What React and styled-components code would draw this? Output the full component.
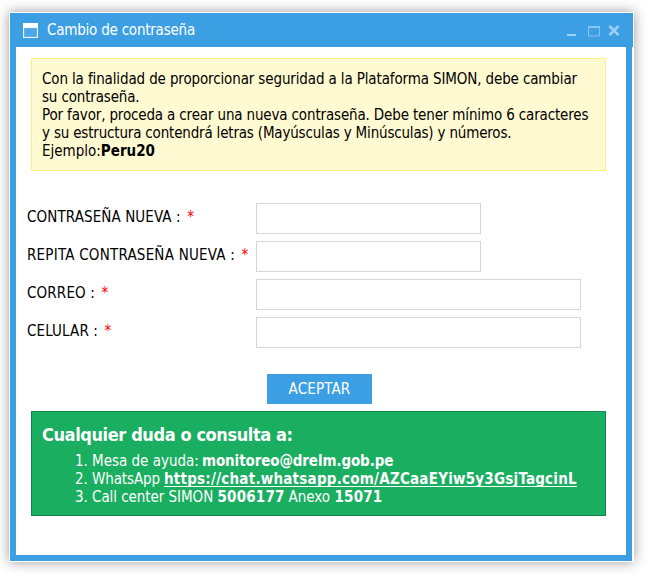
import React from "react";
import styled, { createGlobalStyle } from "styled-components";

const GlobalStyle = createGlobalStyle`
  *, *::before, *::after { box-sizing: border-box; }
  body {
    margin: 0;
    background: #fff;
    color: #000;
    font: 15px/18px "DejaVu Sans Condensed", "DejaVu Sans", Tahoma, sans-serif;
  }
`;

const Page = styled.div`
  height: 574px;
  padding: 12px 12px 12px 9px;
  overflow: hidden;
`;

const Window = styled.section`
  display: flex;
  flex-direction: column;
  height: 550px;
  border: 1px solid #fff;
  background: #fff;
  box-shadow: 0 0 12px rgba(0, 0, 0, 0.4);
`;

const TitleBar = styled.header`
  display: flex;
  align-items: center;
  flex: none;
  height: 34px;
  padding: 0 12px 0 13px;
  background: #3c9fe3;
  color: #fff;
`;

const WindowIcon = styled.svg`
  flex: none;
  margin-right: 8px;
`;

const Title = styled.h1`
  flex: 1;
  margin: 0;
  font-size: 15px;
  font-weight: 400;
  letter-spacing: -0.22px;
`;

const Controls = styled.svg`
  flex: none;
`;

const Body = styled.div`
  flex: 1;
  margin-right: 1px;
  padding: 11px 20px 0 15px;
  border: solid #3c9fe3;
  border-width: 0 6px 6px;
`;

const Run = styled.span`
  letter-spacing: ${(p) => p.$track || 0}px;
  white-space: nowrap;
`;

const Strong = styled(Run).attrs({ as: "strong" })``;

const Notice = styled.div`
  height: 113px;
  padding: 11px 10px;
  border: 1px solid #fff07e;
  background: #fffad1;
`;

const NoticeLine = styled.div`
  height: 18px;
`;

const Form = styled.form`
  display: grid;
  row-gap: 7px;
  margin: 32px 0 0 -4px;
`;

const Field = styled.label`
  display: grid;
  grid-template-columns: 229px 1fr;
  height: 31px;
`;

const Label = styled.span`
  padding-top: 5px;
  white-space: nowrap;
`;

const Required = styled.span`
  margin-left: 6.5px;
  color: #f00;
`;

const Input = styled.input`
  width: ${(p) => (p.$wide ? 325 : 225)}px;
  height: 31px;
  padding: 4px 6px;
  border: 1px solid #d5d5d5;
  border-radius: 0;
  outline: none;
  background: #fff;
  font: inherit;
`;

const Accept = styled.button`
  display: block;
  width: 105px;
  height: 30px;
  margin: 26px 0 7px 236px;
  padding: 0;
  border: 0;
  background: #3c9fe3;
  color: #fff;
  font: inherit;
`;

const Help = styled.div`
  height: 105px;
  padding: 14px 10px;
  border: 1px solid #14854a;
  background: #19ae60;
  color: #fff;
`;

const HelpTitle = styled.h2`
  margin: 0;
  font-size: 18px;
  line-height: 18px;
  letter-spacing: -0.4px;
`;

const HelpList = styled.ol`
  margin: 8px 0 0;
  padding: 0 0 0 33px;
  list-style: none;
`;

const HelpItem = styled.li`
  display: flex;
  height: 18px;
`;

const Num = styled.span`
  width: 17px;
`;

const Lead = styled.span`
  width: ${(p) => p.$w}px;
  letter-spacing: ${(p) => p.$track || 0}px;
  white-space: nowrap;
`;

const Link = styled.a`
  color: inherit;
  font-weight: 700;
  letter-spacing: 0.23px;
  text-decoration: underline;
  text-decoration-thickness: 1px;
  text-underline-offset: 2px;
  text-decoration-skip-ink: none;
`;

const notice = [
  ["Con la finalidad de proporcionar seguridad a la Plataforma SIMON, debe cambiar", -0.13],
  ["su contraseña.", -0.16],
  ["Por favor, proceda a crear una nueva contraseña. Debe tener mínimo 6 caracteres", -0.15],
  ["y su estructura contendrá letras (Mayúsculas y Minúsculas) y números.", -0.18],
];

const fields = [
  { label: "CONTRASEÑA NUEVA :", track: 0.1, type: "password" },
  { label: "REPITA CONTRASEÑA NUEVA :", track: 0.22, type: "password" },
  { label: "CORREO :", track: 0.15, type: "text", wide: true },
  { label: "CELULAR :", track: 0.12, type: "text", wide: true },
];

export default function App() {
  return (
    <>
      <GlobalStyle />
      <Page>
        <Window>
          <TitleBar>
            <WindowIcon width="16" height="16" viewBox="0 0 16 16">
              <path d="M0 1h15v15H0z" fill="#e9f4fc" />
              <path d="M0 1h15v4H0z" fill="#fff" />
              <path d="M1 6h13v9H1z" fill="#64b2e8" />
              <path d="M2 7h11v7H2z" fill="#4ba7e5" />
            </WindowIcon>
            <Title>Cambio de contraseña</Title>
            <Controls width="54" height="14" viewBox="0 0 54 14">
              <path d="M0 11h9v2H0z" fill="#9ed0f2" />
              <path d="M21.5 3.5h11v9.5h-11z" fill="none" stroke="#8ac5ef" />
              <path d="M21 3h12v2H21z" fill="#8ac5ef" />
              <path d="M42.4 3l9.2 9.2M51.6 3l-9.2 9.2" fill="none" stroke="#9ed0f2" strokeWidth="2.6" />
            </Controls>
          </TitleBar>
          <Body>
            <Notice>
              {notice.map(([text, track]) => (
                <NoticeLine key={text}>
                  <Run $track={track}>{text}</Run>
                </NoticeLine>
              ))}
              <NoticeLine>
                <Run>Ejemplo:</Run>
                <Strong>Peru20</Strong>
              </NoticeLine>
            </Notice>
            <Form>
              {fields.map((f) => (
                <Field key={f.label}>
                  <Label>
                    <Run $track={f.track}>{f.label}</Run>
                    <Required>*</Required>
                  </Label>
                  <Input type={f.type} $wide={f.wide} />
                </Field>
              ))}
            </Form>
            <Accept type="button">
              <Run $track={0.15}>ACEPTAR</Run>
            </Accept>
            <Help>
              <HelpTitle>Cualquier duda o consulta a:</HelpTitle>
              <HelpList>
                <HelpItem>
                  <Num>1.</Num>
                  <Lead $w={110}>Mesa de ayuda:</Lead>
                  <Strong $track={-0.11}>monitoreo@drelm.gob.pe</Strong>
                </HelpItem>
                <HelpItem>
                  <Num>2.</Num>
                  <Lead $w={72} $track={-0.1}>WhatsApp</Lead>
                  <Link>https://chat.whatsapp.com/AZCaaEYiw5y3GsjTagcinL</Link>
                </HelpItem>
                <HelpItem>
                  <Num>3.</Num>
                  <Lead $w={125.5} $track={-0.05}>Call center SIMON</Lead>
                  <Lead as="strong" $w={71} $track={0.2}>5006177</Lead>
                  <Lead $w={46}>Anexo</Lead>
                  <Strong $track={0.2}>15071</Strong>
                </HelpItem>
              </HelpList>
            </Help>
          </Body>
        </Window>
      </Page>
    </>
  );
}
